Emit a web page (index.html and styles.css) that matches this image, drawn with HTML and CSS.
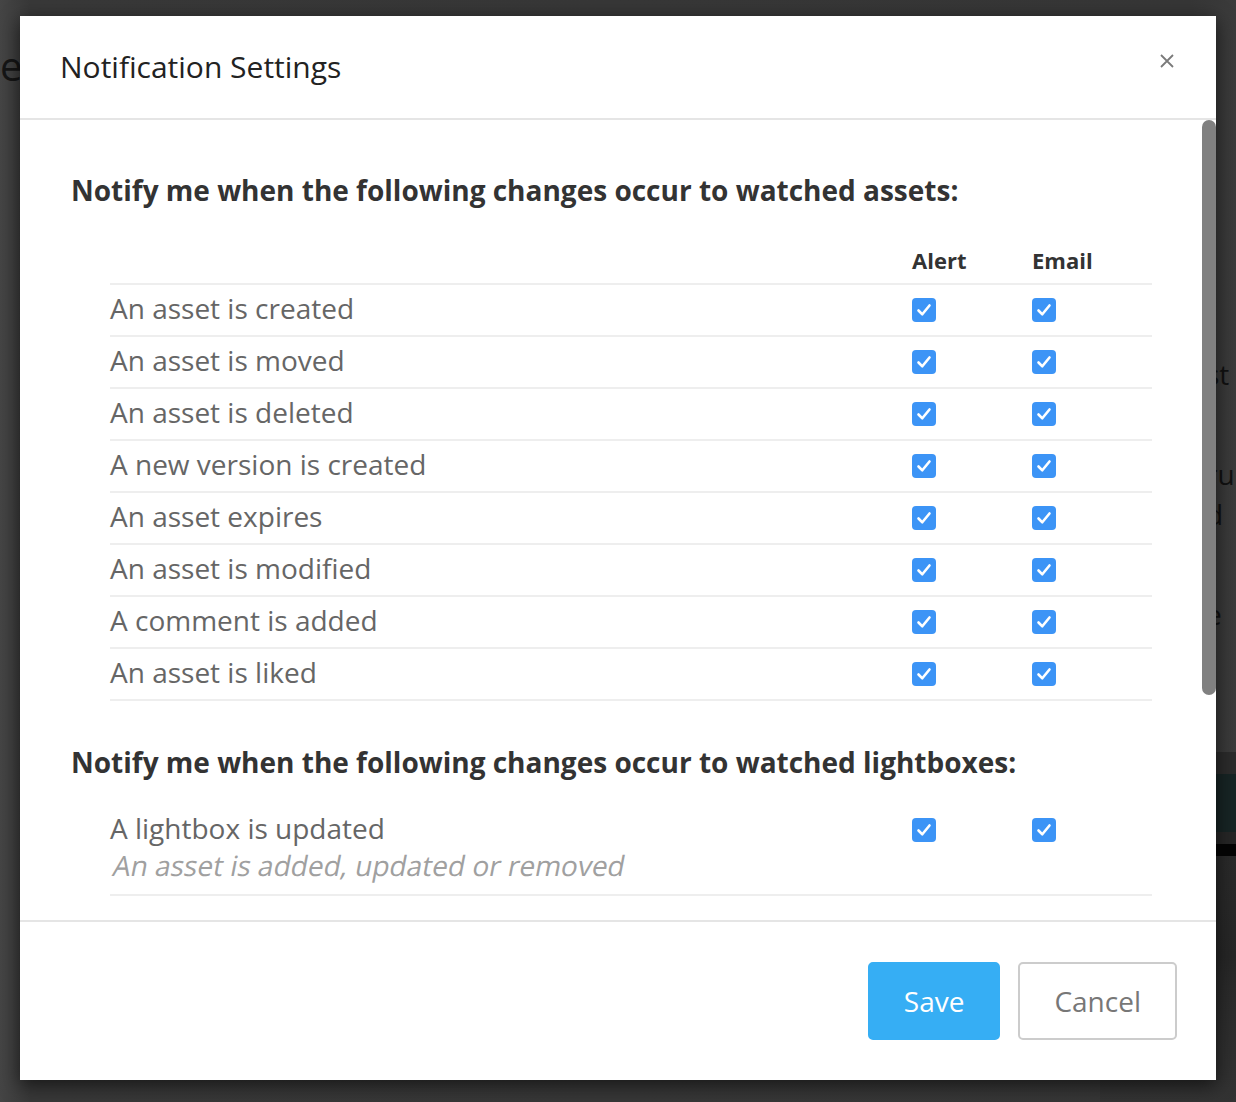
FILE: index.html
```html
<!DOCTYPE html>
<html lang="en">
<head>
    <meta charset="UTF-8">
    <meta name="viewport" content="width=device-width, initial-scale=1.0">
    <title>Notification Settings</title>
    <link rel="stylesheet" href="styles.css">
</head>
<body>
    <!-- page behind the overlay, mostly hidden -->
    <div class="page">
        <div class="page-title">es</div>
        <div class="page-side">
            <p class="side-a">st</p>
            <p class="side-b">ru</p>
            <p class="side-c">d</p>
            <p class="side-d">e</p>
        </div>
        <div class="page-band"></div>
        <div class="page-strip"></div>
    </div>

    <div class="modal">
        <div class="modal-header">
            <h2 class="modal-title">Notification Settings</h2>
            <button class="close" aria-label="Close">
                <svg width="14" height="14" viewBox="0 0 14 14">
                    <path d="M1 1 L13 13 M13 1 L1 13" stroke="#7a7a7a" stroke-width="1.8" fill="none"/>
                </svg>
            </button>
        </div>

        <div class="modal-body">
            <h3 class="section-title">Notify me when the following changes occur to watched assets:</h3>
            <div class="settings">
                <div class="row head">
                    <span class="label"></span>
                    <span class="col">Alert</span>
                    <span class="col">Email</span>
                </div>
                <div class="row"><span class="label">An asset is created</span><span class="col"><i class="check"></i></span><span class="col"><i class="check"></i></span></div>
                <div class="row"><span class="label">An asset is moved</span><span class="col"><i class="check"></i></span><span class="col"><i class="check"></i></span></div>
                <div class="row"><span class="label">An asset is deleted</span><span class="col"><i class="check"></i></span><span class="col"><i class="check"></i></span></div>
                <div class="row"><span class="label">A new version is created</span><span class="col"><i class="check"></i></span><span class="col"><i class="check"></i></span></div>
                <div class="row"><span class="label">An asset expires</span><span class="col"><i class="check"></i></span><span class="col"><i class="check"></i></span></div>
                <div class="row"><span class="label">An asset is modified</span><span class="col"><i class="check"></i></span><span class="col"><i class="check"></i></span></div>
                <div class="row"><span class="label">A comment is added</span><span class="col"><i class="check"></i></span><span class="col"><i class="check"></i></span></div>
                <div class="row"><span class="label">An asset is liked</span><span class="col"><i class="check"></i></span><span class="col"><i class="check"></i></span></div>
            </div>

            <h3 class="section-title second">Notify me when the following changes occur to watched lightboxes:</h3>
            <div class="settings">
                <div class="row tall">
                    <span class="label">A lightbox is updated<span class="hint">An asset is added, updated or removed</span></span>
                    <span class="col"><i class="check"></i></span>
                    <span class="col"><i class="check"></i></span>
                </div>
            </div>

            <div class="scroll-thumb"></div>
        </div>

        <div class="modal-footer">
            <button class="button primary">Save</button>
            <button class="button">Cancel</button>
        </div>
    </div>
</body>
</html>
```

FILE: styles.css
```css
html, body {
    margin: 0;
    height: 1102px;
    overflow: hidden;
}
body {
    font-family: "Open Sans", Arial, sans-serif;
    background: #3a3a3a;
    position: relative;
}

/* background page */
.page {
    position: absolute;
    inset: 0;
    background: linear-gradient(90deg, #454545 0, #383838 30px, #363636 1190px, #3b3b3b 100%);
}
.page-title {
    position: absolute;
    left: 0;
    top: 38px;
    font-size: 40px;
    color: #151515;
}
.page-side {
    position: absolute;
    left: 1206px;
    top: 354px;
    font-size: 28px;
    line-height: 40px;
    color: #111;
}
.page-side p { margin: 0; white-space: nowrap; }
.side-b { margin-top: 60px !important; }
.side-d { margin-top: 60px !important; }
.page-band {
    position: absolute;
    left: 1100px;
    right: 0;
    top: 752px;
    height: 104px;
    background: linear-gradient(180deg, #2b2b2b 0, #2b2b2b 22px, #172424 22px, #172424 80px, #262626 80px, #262626 92px, #050505 92px);
}
.page-strip {
    position: absolute;
    left: 1100px;
    right: 0;
    top: 856px;
    height: 246px;
    background: linear-gradient(180deg, #2a2a2a 0, #262626 100px, #2a2a2a 130px, #333 100%);
}

/* modal */
.modal {
    position: absolute;
    left: 20px;
    top: 16px;
    width: 1196px;
    height: 1064px;
    background: #fff;
    box-shadow: 0 5px 18px rgba(0, 0, 0, 0.6);
    display: flex;
    flex-direction: column;
}
.modal-header {
    height: 102px;
    border-bottom: 2px solid #e5e5e5;
    display: flex;
    align-items: center;
    justify-content: space-between;
    padding: 0 42px 0 40px;
    box-sizing: content-box;
}
.modal-title {
    margin: 0;
    margin-top: -2px;
    font-size: 30px;
    font-weight: 400;
    color: #222;
}
.close {
    border: 0;
    background: none;
    padding: 0;
    margin-top: -12px;
    width: 14px;
    height: 14px;
    cursor: pointer;
}
.close svg { display: block; }

.modal-body {
    position: relative;
    height: 800px;
    padding: 52px 64px 0 51px;
    box-sizing: border-box;
    overflow: hidden;
}
.scroll-thumb {
    position: absolute;
    right: 0;
    top: 0;
    width: 14px;
    height: 575px;
    border-radius: 7px;
    background: #808080;
}
.section-title {
    margin: 0;
    font-size: 28px;
    line-height: 36px;
    font-weight: 700;
    color: #333;
}
.section-title.second {
    margin-top: 43px;
}

.settings {
    margin-left: 39px;
    margin-top: 35px;
    border-bottom: 2px solid #eee;
}
.section-title.second + .settings {
    margin-top: 31px;
}
.row {
    display: flex;
    align-items: center;
    height: 50px;
    border-top: 2px solid #eee;
    font-size: 28px;
    color: #666;
}
.row .label {
    margin-top: -5px;
}
.row.head {
    border-top: 0;
    height: 34px;
    padding-bottom: 6px;
    font-size: 22px;
    font-weight: 700;
    color: #333;
}
.row.tall {
    border-top: 0;
    height: auto;
    align-items: flex-start;
    padding-bottom: 10px;
    line-height: 37px;
}
.row.tall .label {
    margin-top: -1px;
}
.label {
    flex: 1;
}
.hint {
    display: block;
    width: max-content;
    color: #a0a0a0;
    transform: skewX(-11deg);
    transform-origin: 0 100%;
}
.col {
    width: 120px;
    display: flex;
    align-items: center;
}
.row.tall .col {
    height: 38px;
}
.check {
    display: block;
    width: 24px;
    height: 24px;
    border-radius: 4px;
    background: #3c94f6 url("data:image/svg+xml,%3Csvg xmlns='http://www.w3.org/2000/svg' width='24' height='24' viewBox='0 0 24 24'%3E%3Cpath d='M6.5 12.5 L10.3 16.3 L17.5 7.5' stroke='white' stroke-width='2.6' fill='none' stroke-linecap='round' stroke-linejoin='round'/%3E%3C/svg%3E") no-repeat center;
}

.modal-footer {
    flex: 1;
    border-top: 2px solid #e5e5e5;
    display: flex;
    justify-content: flex-end;
    align-items: flex-start;
    gap: 18px;
    padding: 40px 39px 0 0;
}
.button {
    height: 78px;
    padding: 0 34px;
    font-family: "Open Sans", Arial, sans-serif;
    font-size: 28px;
    color: #777;
    background: #fff;
    border: 2px solid #ccc;
    border-radius: 5px;
    cursor: pointer;
}
.button.primary {
    padding: 0 34px;
    color: #fff;
    background: #36aef4;
    border-color: #36aef4;
}
```
